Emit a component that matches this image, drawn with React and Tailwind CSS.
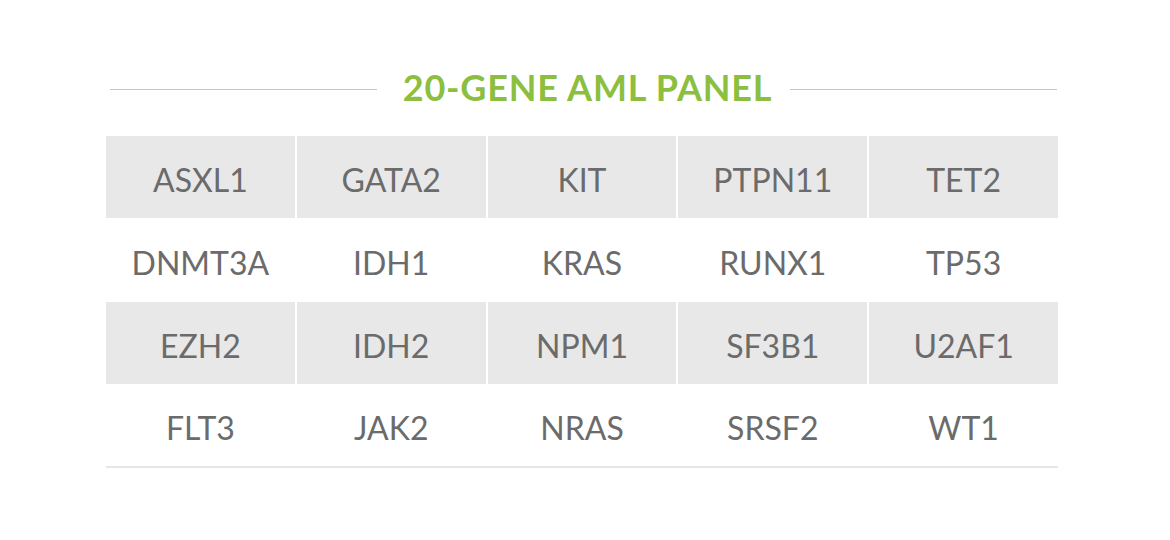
const rows = [
  { shaded: true, genes: ['ASXL1', 'GATA2', 'KIT', 'PTPN11', 'TET2'] },
  { shaded: false, genes: ['DNMT3A', 'IDH1', 'KRAS', 'RUNX1', 'TP53'] },
  { shaded: true, genes: ['EZH2', 'IDH2', 'NPM1', 'SF3B1', 'U2AF1'] },
  { shaded: false, genes: ['FLT3', 'JAK2', 'NRAS', 'SRSF2', 'WT1'] },
];

export default function App() {
  return (
    <div className="w-[1170px] h-[540px] bg-white" style={{ fontFamily: 'Lato, "Open Sans", sans-serif' }}>
      <div className="ml-[106px] w-[952px] pt-[65px]">
        {/* Title */}
        <div className="flex items-center pl-[4px] pr-[1px]">
          <div className="flex-1 h-px bg-[#c4c4c4] mt-[4px]" />
          <h1 className="pl-[26px] pr-[18px] text-[36px] leading-[44px] font-bold text-[#8cbf3f] tracking-[0.8px]">
            20-GENE AML PANEL
          </h1>
          <div className="flex-1 h-px bg-[#c4c4c4] mt-[4px]" />
        </div>

        {/* Gene table */}
        <div className="mt-[27px] border-b-2 border-[#e6e6e6]">
          {rows.map((row, i) => (
            <div key={i} className={`grid grid-cols-5 gap-x-[2px] ${i === 1 ? 'h-[84px]' : 'h-[82px]'}`}>
              {row.genes.map((g) => (
                <div
                  key={g}
                  className={`flex items-center justify-center pt-[5px] text-[32px] text-[#6b6b6b] ${row.shaded ? 'bg-[#e8e8e8]' : 'bg-white'}`}
                >
                  {g}
                </div>
              ))}
            </div>
          ))}
        </div>
      </div>
    </div>
  );
}
